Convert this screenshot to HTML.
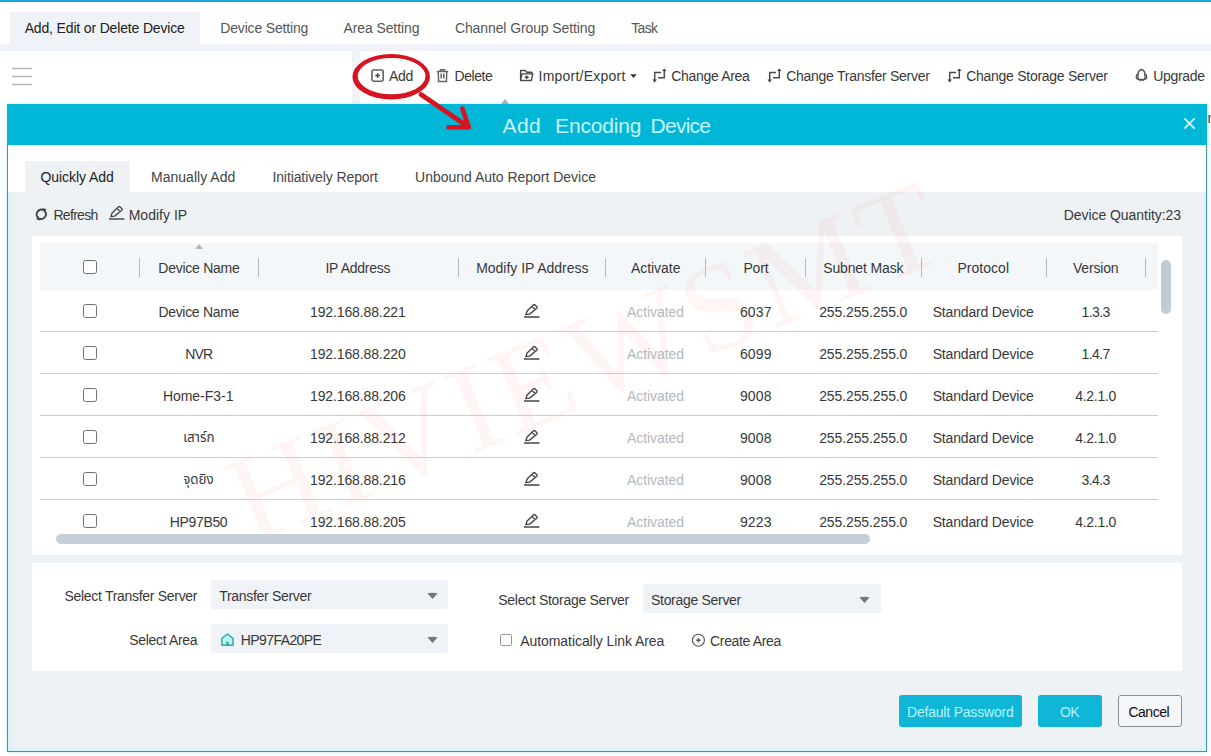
<!DOCTYPE html>
<html lang="en">
<head>
<meta charset="utf-8">
<title>Add Encoding Device</title>
<style>
*{box-sizing:border-box;margin:0;padding:0}
html,body{width:1211px;height:756px;overflow:hidden;background:#fff}
body{font-family:"Liberation Sans","Noto Sans Thai","Noto Sans CJK SC",sans-serif;font-size:14px;color:#383838;position:relative}
.abs{position:absolute}
.t{position:absolute;white-space:nowrap;line-height:20px;height:20px}
#topline{left:0;top:0;width:1211px;height:2px;background:#1aa6d5}
#tabgap{left:0;top:44px;width:1211px;height:7px;background:#eff2f6}
#tab1{left:10px;top:12px;width:190px;height:33px;background:#eff2f6}
#dlg{left:7px;top:104px;width:1200px;height:648px;background:#eff2f5;border:1px solid #4d8f99;border-top:none;box-shadow:inset 0 0 4px 2px #cdf6fb,0 0 4px rgba(0,183,216,.25)}
#dlghead{left:7px;top:104px;width:1200px;height:41px;background:#00b7d8}
#dlgwhite{left:8px;top:145px;width:1198px;height:47px;background:#fff}
#qtab{left:25px;top:161px;width:105px;height:31px;background:#eff2f5}
#tblpanel{left:32px;top:236px;width:1150px;height:319px;background:#fff}
#thead{left:40px;top:243px;width:1118px;height:47px;background:#f4f7fa}
.sep{position:absolute;top:258px;width:1px;height:18.5px;background:#b4b9bf}
.rl{position:absolute;left:40px;width:1118px;height:1px;background:#c9cdd2}
.cb{position:absolute;width:14px;height:14px;border:1px solid #707070;border-radius:2.5px;background:#fff}
#botpanel{left:32px;top:563px;width:1150px;height:108px;background:#fff}
.sel{position:absolute;height:29px;background:#eff2f6;border-radius:2px}
.btn{position:absolute;top:695px;height:32px;border-radius:3px}
</style>
</head>
<body>
<div class="abs" id="topline"></div>
<div class="abs" id="tab1"></div>
<div class="abs" id="tabgap"></div>
<div class="abs" style="left:352px;top:51px;width:8px;height:53px;background:#f1f3f7"></div>
<svg class="abs" style="left:10px;top:64px" width="24" height="24" viewBox="0 0 24 24"><path d="M2 4.5H22M2 12.5H22M2 20.5H22" stroke="#b4b8bd" stroke-width="1.3" fill="none"/></svg>
<svg class="abs" style="left:369px;top:67px" width="18" height="18" viewBox="0 0 18 18"><rect x="3" y="3" width="11.2" height="11.2" rx="1.6" fill="none" stroke="#606060" stroke-width="1.6"/><path d="M6.3 8.6H10.9M8.6 6.3V10.9" stroke="#444" stroke-width="1.5"/></svg>
<svg class="abs" style="left:434px;top:67px" width="18" height="18" viewBox="0 0 18 18"><path d="M2.8 4.4H14.2M6.4 4.2V2.7H10.6V4.2M4.2 4.6L4.6 14.4H12.4L12.8 4.6M7.2 6.6V11.4M9.8 6.6V11.4" fill="none" stroke="#666" stroke-width="1.5"/></svg>
<svg class="abs" style="left:517px;top:67px" width="18" height="18" viewBox="517 67 18 18"><path d="M520.6 80.5V70.5H525.2L526.8 72.2H532V73.8M520.6 80.5L521.9 73.9H532.8L531.4 80.5Z" fill="none" stroke="#4a4a4a" stroke-width="1.35" stroke-linejoin="round"/><path d="M524.7 77.2H528.7M526.7 75.4V79" stroke="#444" stroke-width="1.4"/></svg>
<svg class="abs" style="left:629px;top:73px" width="9" height="6" viewBox="0 0 9 6"><path d="M1.2 1.3H7.8L4.5 4.9Z" fill="#333"/></svg>
<svg class="abs" style="left:650px;top:67px" width="18" height="18" viewBox="0 0 18 18"><path d="M4.7 13.6V5.4H11M14.3 3.4V10.8H8" fill="none" stroke="#4a4a4a" stroke-width="1.5"/><path d="M2.4 12.6H7L4.7 15.4ZM12 4H16.6L14.3 1.4Z" fill="#444"/></svg>
<svg class="abs" style="left:765px;top:67px" width="18" height="18" viewBox="0 0 18 18"><path d="M4.7 13.6V5.4H11M14.3 3.4V10.8H8" fill="none" stroke="#4a4a4a" stroke-width="1.5"/><path d="M2.4 12.6H7L4.7 15.4ZM12 4H16.6L14.3 1.4Z" fill="#444"/></svg>
<svg class="abs" style="left:945px;top:67px" width="18" height="18" viewBox="0 0 18 18"><path d="M4.7 13.6V5.4H11M14.3 3.4V10.8H8" fill="none" stroke="#4a4a4a" stroke-width="1.5"/><path d="M2.4 12.6H7L4.7 15.4ZM12 4H16.6L14.3 1.4Z" fill="#444"/></svg>
<svg class="abs" style="left:1133px;top:66px" width="18" height="18" viewBox="1133 66 18 18"><path d="M1138.1 79.4V73.6Q1138.2 70.6 1141.5 69.4Q1144.8 70.6 1144.9 73.6V79.4Z" fill="none" stroke="#505050" stroke-width="1.3" stroke-linejoin="round"/><path d="M1138 73.6Q1135.7 75.6 1136.5 78.6L1138 79.2M1145 73.6Q1147.3 75.6 1146.5 78.6L1145 79.2" fill="none" stroke="#505050" stroke-width="1.3"/><path d="M1138.8 80.5H1144.2" stroke="#777" stroke-width="1.2"/></svg>
<div class="t" style="left:1207.5px;top:108px;color:#444">n</div>
<div class="abs" id="dlg"></div>
<div class="abs" id="dlghead"></div>
<div class="abs" style="left:501px;top:99px;width:0;height:0;border-left:4px solid transparent;border-right:4px solid transparent;border-bottom:5px solid #9fb3c0"></div>
<div class="abs" id="dlgwhite"></div>
<div class="abs" id="qtab"></div>
<div class="abs" id="tblpanel"></div>
<div class="abs" id="thead"></div>
<div class="abs" id="botpanel"></div>
<svg class="abs" style="left:1182px;top:116px" width="15" height="15" viewBox="0 0 15 15"><path d="M2.4 2.4L12.6 12.6M12.6 2.4L2.4 12.6" stroke="#d4f7fc" stroke-width="1.9" fill="none"/></svg>
<div class="abs" style="left:585px;top:362px;width:0;height:0"><div style="position:absolute;left:-400px;top:-70px;width:800px;height:140px;line-height:140px;text-align:center;font-family:'Liberation Serif',serif;font-size:126px;color:rgba(255,60,60,0.05);transform:rotate(-22.4deg);white-space:nowrap;letter-spacing:4.5px;padding-left:4.5px">HIVIEWSMT</div></div>
<div class="cb" style="left:83px;top:260px"></div>
<div class="abs" style="left:195px;top:244px;width:0;height:0;border-left:4px solid transparent;border-right:4px solid transparent;border-bottom:5px solid #b5b9be"></div>
<div class="sep" style="left:139px"></div>
<div class="sep" style="left:258px"></div>
<div class="sep" style="left:458px"></div>
<div class="sep" style="left:605px"></div>
<div class="sep" style="left:705px"></div>
<div class="sep" style="left:805px"></div>
<div class="sep" style="left:920.5px"></div>
<div class="sep" style="left:1045.5px"></div>
<div class="sep" style="left:1145px"></div>
<div class="cb" style="left:83px;top:304px"></div>
<svg class="abs" style="left:522.1px;top:301.9px" width="20" height="18" viewBox="-2 -15 20 18"><path d="M1.9 -2.3L2.9 -5.8L9.5 -12.2Q10.3 -12.9 11.1 -12.1L12.9 -10.3Q13.6 -9.5 12.8 -8.7L5.6 -2.9Z M8 -10.7L11.1 -7.4" stroke="#444" stroke-width="1.35" fill="none" stroke-linejoin="round"/><path d="M0 0H15.4" stroke="#444" stroke-width="1.5"/></svg>
<div class="rl" style="top:331px"></div>
<div class="cb" style="left:83px;top:346px"></div>
<svg class="abs" style="left:522.1px;top:343.9px" width="20" height="18" viewBox="-2 -15 20 18"><path d="M1.9 -2.3L2.9 -5.8L9.5 -12.2Q10.3 -12.9 11.1 -12.1L12.9 -10.3Q13.6 -9.5 12.8 -8.7L5.6 -2.9Z M8 -10.7L11.1 -7.4" stroke="#444" stroke-width="1.35" fill="none" stroke-linejoin="round"/><path d="M0 0H15.4" stroke="#444" stroke-width="1.5"/></svg>
<div class="rl" style="top:373px"></div>
<div class="cb" style="left:83px;top:388px"></div>
<svg class="abs" style="left:522.1px;top:385.9px" width="20" height="18" viewBox="-2 -15 20 18"><path d="M1.9 -2.3L2.9 -5.8L9.5 -12.2Q10.3 -12.9 11.1 -12.1L12.9 -10.3Q13.6 -9.5 12.8 -8.7L5.6 -2.9Z M8 -10.7L11.1 -7.4" stroke="#444" stroke-width="1.35" fill="none" stroke-linejoin="round"/><path d="M0 0H15.4" stroke="#444" stroke-width="1.5"/></svg>
<div class="rl" style="top:415px"></div>
<div class="cb" style="left:83px;top:430px"></div>
<svg class="abs" style="left:522.1px;top:427.9px" width="20" height="18" viewBox="-2 -15 20 18"><path d="M1.9 -2.3L2.9 -5.8L9.5 -12.2Q10.3 -12.9 11.1 -12.1L12.9 -10.3Q13.6 -9.5 12.8 -8.7L5.6 -2.9Z M8 -10.7L11.1 -7.4" stroke="#444" stroke-width="1.35" fill="none" stroke-linejoin="round"/><path d="M0 0H15.4" stroke="#444" stroke-width="1.5"/></svg>
<div class="rl" style="top:457px"></div>
<div class="cb" style="left:83px;top:472px"></div>
<svg class="abs" style="left:522.1px;top:469.9px" width="20" height="18" viewBox="-2 -15 20 18"><path d="M1.9 -2.3L2.9 -5.8L9.5 -12.2Q10.3 -12.9 11.1 -12.1L12.9 -10.3Q13.6 -9.5 12.8 -8.7L5.6 -2.9Z M8 -10.7L11.1 -7.4" stroke="#444" stroke-width="1.35" fill="none" stroke-linejoin="round"/><path d="M0 0H15.4" stroke="#444" stroke-width="1.5"/></svg>
<div class="rl" style="top:499px"></div>
<div class="cb" style="left:83px;top:514px"></div>
<svg class="abs" style="left:522.1px;top:511.9px" width="20" height="18" viewBox="-2 -15 20 18"><path d="M1.9 -2.3L2.9 -5.8L9.5 -12.2Q10.3 -12.9 11.1 -12.1L12.9 -10.3Q13.6 -9.5 12.8 -8.7L5.6 -2.9Z M8 -10.7L11.1 -7.4" stroke="#444" stroke-width="1.35" fill="none" stroke-linejoin="round"/><path d="M0 0H15.4" stroke="#444" stroke-width="1.5"/></svg>
<div class="abs" style="left:56px;top:534px;width:813.5px;height:9.8px;border-radius:5px;background:#c4cfd7"></div>
<div class="abs" style="left:1161px;top:260px;width:10px;height:54px;border-radius:5px;background:#c0cbd3"></div>
<svg class="abs" style="left:33px;top:206px" width="17" height="17" viewBox="33 206 17 17"><path d="M44.5 210.9A4.7 4.7 0 0 1 39 218.4M38.1 217.7A4.7 4.7 0 0 1 43.6 210.2" fill="none" stroke="#444" stroke-width="1.9"/><path d="M42.6 208L46.6 209.3L44 212.4ZM40 220.6L36 219.3L38.6 216.2Z" fill="#444"/></svg>
<svg class="abs" style="left:107.0px;top:204.3px" width="20" height="18" viewBox="-2 -15 20 18"><path d="M1.9 -2.3L2.9 -5.8L9.5 -12.2Q10.3 -12.9 11.1 -12.1L12.9 -10.3Q13.6 -9.5 12.8 -8.7L5.6 -2.9Z M8 -10.7L11.1 -7.4" stroke="#4a4a4a" stroke-width="1.35" fill="none" stroke-linejoin="round"/><path d="M0 0H15.4" stroke="#4a4a4a" stroke-width="1.5"/></svg>
<div class="sel" style="left:211px;top:580px;width:237.2px;height:28.6px"></div>
<svg class="abs" style="left:426.0px;top:592.3px" width="13" height="8" viewBox="0 0 13 8"><path d="M1.3 1.2Q6.5 0.4 11.7 1.2L6.5 7Z" fill="#767676"/></svg>
<div class="sel" style="left:211px;top:624px;width:237.2px"></div>
<svg class="abs" style="left:219px;top:631px" width="17" height="17" viewBox="219 631 17 17"><path d="M227.4 634L233 638.3V645.2H221.9V638.3Z" stroke="#37a9a4" stroke-width="1.5" fill="#b9f6f6" stroke-linejoin="round"/><rect x="226.3" y="641.8" width="2.3" height="3.4" fill="#2f9f9a"/></svg>
<svg class="abs" style="left:426.0px;top:636.3px" width="13" height="8" viewBox="0 0 13 8"><path d="M1.3 1.2Q6.5 0.4 11.7 1.2L6.5 7Z" fill="#767676"/></svg>
<div class="sel" style="left:643px;top:584px;width:237.7px"></div>
<svg class="abs" style="left:858.2px;top:596.3px" width="13" height="8" viewBox="0 0 13 8"><path d="M1.3 1.2Q6.5 0.4 11.7 1.2L6.5 7Z" fill="#767676"/></svg>
<div class="cb" style="left:500px;top:633.8px;width:12px;height:12px;border-color:#999;border-radius:1.5px"></div>
<svg class="abs" style="left:691px;top:633.1px" width="15" height="15" viewBox="0 0 15 15"><circle cx="7.4" cy="7.2" r="6" stroke="#555" stroke-width="1.15" fill="none"/><path d="M5.2 7.2H9.6M7.4 5V9.4" stroke="#555" stroke-width="1.4"/></svg>
<div class="btn" style="left:899px;width:123px;background:#0fb6d7"></div>
<div class="btn" style="left:1038px;width:64px;background:#0fb6d7"></div>
<div class="btn" style="left:1118px;width:64px;background:#f4f6f8;border:1px solid #8a8f94"></div>
<div class="t" style="left:24.7px;top:18.0px;letter-spacing:-0.16px;color:#222;">Add, Edit or Delete Device</div>
<div class="t" style="left:220.3px;top:18.0px;letter-spacing:-0.17px;color:#555;">Device Setting</div>
<div class="t" style="left:343.4px;top:18.0px;letter-spacing:-0.09px;color:#555;">Area Setting</div>
<div class="t" style="left:454.9px;top:18.0px;letter-spacing:-0.10px;color:#555;">Channel Group Setting</div>
<div class="t" style="left:631.2px;top:18.0px;letter-spacing:-0.66px;color:#555;">Task</div>
<div class="t" style="left:388.9px;top:66.0px;letter-spacing:-0.25px;">Add</div>
<div class="t" style="left:454.5px;top:66.0px;letter-spacing:-0.45px;">Delete</div>
<div class="t" style="left:538.5px;top:66.0px;letter-spacing:0.24px;">Import/Export</div>
<div class="t" style="left:671.2px;top:66.0px;letter-spacing:-0.31px;">Change Area</div>
<div class="t" style="left:786.2px;top:66.0px;letter-spacing:-0.27px;">Change Transfer Server</div>
<div class="t" style="left:966.2px;top:66.0px;letter-spacing:-0.27px;">Change Storage Server</div>
<div class="t" style="left:1153.3px;top:66.0px;letter-spacing:-0.32px;">Upgrade</div>
<div class="t" style="left:502.6px;top:111.3px;letter-spacing:0.33px;color:#c8f6fd;font-size:21px;line-height:30px;height:30px;">Add</div>
<div class="t" style="left:555.1px;top:111.3px;letter-spacing:-0.18px;color:#c8f6fd;font-size:21px;line-height:30px;height:30px;">Encoding</div>
<div class="t" style="left:650.6px;top:111.3px;letter-spacing:-0.75px;color:#c8f6fd;font-size:21px;line-height:30px;height:30px;">Device</div>
<div class="t" style="left:40.5px;top:167.0px;letter-spacing:-0.06px;color:#222;">Quickly Add</div>
<div class="t" style="left:151.0px;top:167.0px;letter-spacing:0.02px;color:#444;">Manually Add</div>
<div class="t" style="left:272.4px;top:167.0px;letter-spacing:-0.10px;color:#444;">Initiatively Report</div>
<div class="t" style="left:415.1px;top:167.0px;letter-spacing:-0.02px;color:#444;">Unbound Auto Report Device</div>
<div class="t" style="left:53.4px;top:205.0px;letter-spacing:-0.68px;">Refresh</div>
<div class="t" style="left:128.7px;top:205.0px;letter-spacing:0.02px;">Modify IP</div>
<div class="t" style="left:1063.7px;top:205.0px;letter-spacing:-0.05px;">Device Quantity:23</div>
<div class="t" style="left:158.3px;top:258.0px;letter-spacing:-0.26px;">Device Name</div>
<div class="t" style="left:325.5px;top:258.0px;letter-spacing:-0.28px;">IP Address</div>
<div class="t" style="left:476.2px;top:258.0px;letter-spacing:-0.02px;">Modify IP Address</div>
<div class="t" style="left:630.9px;top:258.0px;letter-spacing:-0.03px;">Activate</div>
<div class="t" style="left:743.4px;top:258.0px;letter-spacing:-0.11px;">Port</div>
<div class="t" style="left:823.2px;top:258.0px;letter-spacing:-0.14px;">Subnet Mask</div>
<div class="t" style="left:957.5px;top:258.0px;letter-spacing:0.02px;">Protocol</div>
<div class="t" style="left:1072.9px;top:258.0px;letter-spacing:-0.17px;">Version</div>
<div class="t" style="left:158.4px;top:302.0px;letter-spacing:-0.31px;">Device Name</div>
<div class="t" style="left:310.0px;top:302.0px;letter-spacing:-0.12px;">192.168.88.221</div>
<div class="t" style="left:627.0px;top:302.0px;letter-spacing:-0.08px;color:#b4b8bc;">Activated</div>
<div class="t" style="left:739.9px;top:302.0px;letter-spacing:0.18px;">6037</div>
<div class="t" style="left:819.2px;top:302.0px;letter-spacing:-0.11px;">255.255.255.0</div>
<div class="t" style="left:932.7px;top:302.0px;letter-spacing:-0.17px;">Standard Device</div>
<div class="t" style="left:1081.4px;top:302.0px;letter-spacing:-0.54px;">1.3.3</div>
<div class="t" style="left:185.2px;top:344.0px;letter-spacing:-0.80px;">NVR</div>
<div class="t" style="left:310.0px;top:344.0px;letter-spacing:-0.12px;">192.168.88.220</div>
<div class="t" style="left:627.0px;top:344.0px;letter-spacing:-0.08px;color:#b4b8bc;">Activated</div>
<div class="t" style="left:739.9px;top:344.0px;letter-spacing:0.18px;">6099</div>
<div class="t" style="left:819.2px;top:344.0px;letter-spacing:-0.11px;">255.255.255.0</div>
<div class="t" style="left:932.7px;top:344.0px;letter-spacing:-0.17px;">Standard Device</div>
<div class="t" style="left:1081.4px;top:344.0px;letter-spacing:-0.54px;">1.4.7</div>
<div class="t" style="left:162.9px;top:386.0px;letter-spacing:-0.03px;">Home-F3-1</div>
<div class="t" style="left:310.0px;top:386.0px;letter-spacing:-0.12px;">192.168.88.206</div>
<div class="t" style="left:627.0px;top:386.0px;letter-spacing:-0.08px;color:#b4b8bc;">Activated</div>
<div class="t" style="left:739.9px;top:386.0px;letter-spacing:0.18px;">9008</div>
<div class="t" style="left:819.2px;top:386.0px;letter-spacing:-0.11px;">255.255.255.0</div>
<div class="t" style="left:932.7px;top:386.0px;letter-spacing:-0.17px;">Standard Device</div>
<div class="t" style="left:1075.2px;top:386.0px;letter-spacing:-0.28px;">4.2.1.0</div>
<div class="t" style="left:198.9px;top:428.0px;transform:translateX(-50%);font-size:13.4px;">เสาร์ก</div>
<div class="t" style="left:310.0px;top:428.0px;letter-spacing:-0.12px;">192.168.88.212</div>
<div class="t" style="left:627.0px;top:428.0px;letter-spacing:-0.08px;color:#b4b8bc;">Activated</div>
<div class="t" style="left:739.9px;top:428.0px;letter-spacing:0.18px;">9008</div>
<div class="t" style="left:819.2px;top:428.0px;letter-spacing:-0.11px;">255.255.255.0</div>
<div class="t" style="left:932.7px;top:428.0px;letter-spacing:-0.17px;">Standard Device</div>
<div class="t" style="left:1075.2px;top:428.0px;letter-spacing:-0.28px;">4.2.1.0</div>
<div class="t" style="left:198.4px;top:470.0px;transform:translateX(-50%);font-size:13.4px;">จุดยิง</div>
<div class="t" style="left:310.0px;top:470.0px;letter-spacing:-0.12px;">192.168.88.216</div>
<div class="t" style="left:627.0px;top:470.0px;letter-spacing:-0.08px;color:#b4b8bc;">Activated</div>
<div class="t" style="left:739.9px;top:470.0px;letter-spacing:0.18px;">9008</div>
<div class="t" style="left:819.2px;top:470.0px;letter-spacing:-0.11px;">255.255.255.0</div>
<div class="t" style="left:932.7px;top:470.0px;letter-spacing:-0.17px;">Standard Device</div>
<div class="t" style="left:1081.4px;top:470.0px;letter-spacing:-0.54px;">3.4.3</div>
<div class="t" style="left:169.7px;top:512.0px;letter-spacing:-0.33px;">HP97B50</div>
<div class="t" style="left:310.0px;top:512.0px;letter-spacing:-0.12px;">192.168.88.205</div>
<div class="t" style="left:627.0px;top:512.0px;letter-spacing:-0.08px;color:#b4b8bc;">Activated</div>
<div class="t" style="left:739.9px;top:512.0px;letter-spacing:0.18px;">9223</div>
<div class="t" style="left:819.2px;top:512.0px;letter-spacing:-0.11px;">255.255.255.0</div>
<div class="t" style="left:932.7px;top:512.0px;letter-spacing:-0.17px;">Standard Device</div>
<div class="t" style="left:1075.2px;top:512.0px;letter-spacing:-0.28px;">4.2.1.0</div>
<div class="t" style="left:64.5px;top:586.0px;letter-spacing:-0.30px;">Select Transfer Server</div>
<div class="t" style="left:219.3px;top:586.0px;letter-spacing:-0.32px;">Transfer Server</div>
<div class="t" style="left:129.3px;top:630.0px;letter-spacing:-0.33px;">Select Area</div>
<div class="t" style="left:240.7px;top:630.0px;letter-spacing:-0.57px;">HP97FA20PE</div>
<div class="t" style="left:498.3px;top:590.0px;letter-spacing:-0.30px;">Select Storage Server</div>
<div class="t" style="left:651.0px;top:590.0px;letter-spacing:-0.30px;">Storage Server</div>
<div class="t" style="left:520.2px;top:631.0px;letter-spacing:-0.06px;">Automatically Link Area</div>
<div class="t" style="left:710.1px;top:631.0px;letter-spacing:-0.35px;">Create Area</div>
<div class="t" style="left:907.0px;top:702.0px;letter-spacing:-0.20px;color:#b5f3fd;">Default Password</div>
<div class="t" style="left:1060.1px;top:702.0px;letter-spacing:-0.80px;color:#b5f3fd;">OK</div>
<div class="t" style="left:1128.4px;top:702.0px;letter-spacing:-0.47px;color:#111;">Cancel</div>
<svg class="abs" style="left:340px;top:45px" width="150" height="95" viewBox="340 45 150 95"><path fill-rule="evenodd" fill="#d7131f" d="M352.4 76.8a38.8 22.7 0 1 0 77.6 0a38.8 22.7 0 1 0 -77.6 0ZM357.7 76.1a33.9 18.2 0 1 0 67.8 0a33.9 18.2 0 1 0 -67.8 0Z"/><path d="M421 94.5L467 126" stroke="#d7131f" stroke-width="4.8" fill="none" stroke-linecap="round"/><path d="M448.5 127.3L468.8 127.2L462.3 108.5" stroke="#d7131f" stroke-width="4.6" fill="none" stroke-linejoin="round" stroke-linecap="round"/></svg>
</body>
</html>
